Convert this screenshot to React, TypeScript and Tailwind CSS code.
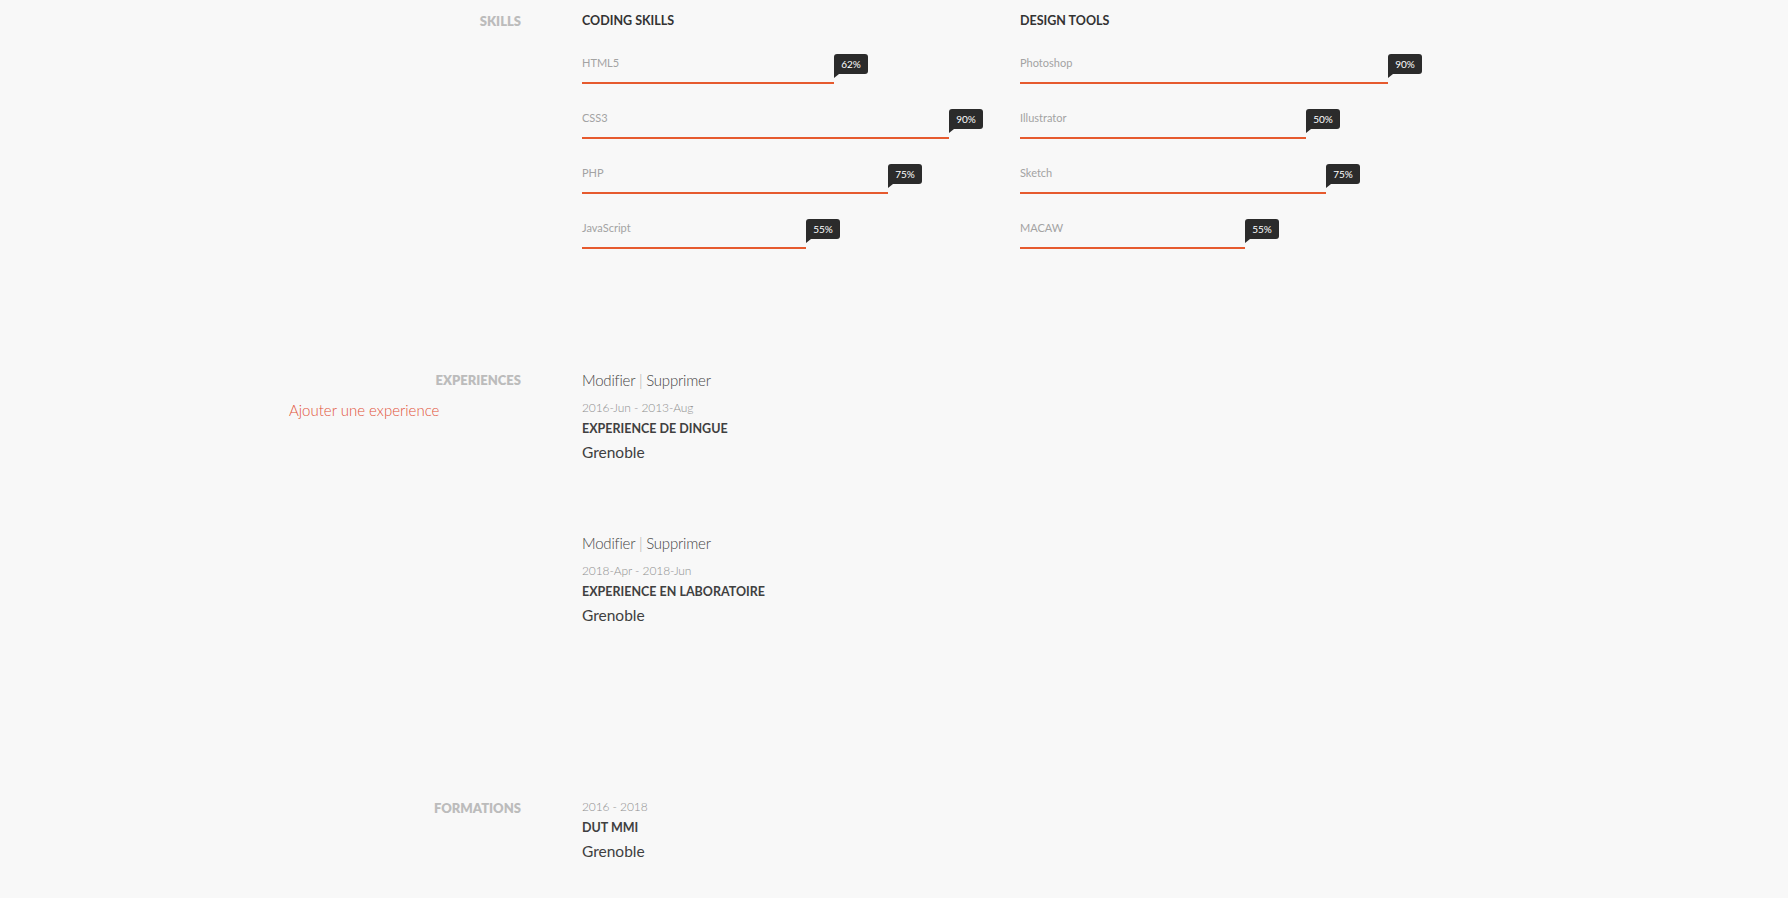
import React from "react";

type Skill = { name: string; label: string; width: number };

const coding: Skill[] = [
  { name: "HTML5", label: "62%", width: 252 },
  { name: "CSS3", label: "90%", width: 367 },
  { name: "PHP", label: "75%", width: 306 },
  { name: "JavaScript", label: "55%", width: 224 },
];

const design: Skill[] = [
  { name: "Photoshop", label: "90%", width: 368 },
  { name: "Illustrator", label: "50%", width: 286 },
  { name: "Sketch", label: "75%", width: 306 },
  { name: "MACAW", label: "55%", width: 225 },
];

const experiences = [
  { dates: "2016-Jun - 2013-Aug", title: "EXPERIENCE DE DINGUE", place: "Grenoble" },
  { dates: "2018-Apr - 2018-Jun", title: "EXPERIENCE EN LABORATOIRE", place: "Grenoble" },
];

const SkillBar = ({ skill }: { skill: Skill }) => (
  <div className="flex flex-col">
    <div className="text-[11px] leading-4 text-[#a3a3a3]">{skill.name}</div>
    <div className="relative mt-[11px] h-[2px] w-[408px]">
      <div className="h-full bg-[#e65a2e]" style={{ width: skill.width }} />
      {/* tooltip sits right on the end of the fill */}
      <div
        className="absolute bottom-[10px] h-[20px] w-[34px] rounded-[3px] rounded-bl-none bg-[#2b2b2b] text-center text-[10px] leading-[20px] text-white"
        style={{ left: skill.width }}
      >
        {skill.label}
        <span className="absolute left-0 top-full h-0 w-0 border-r-[5px] border-t-[4px] border-r-transparent border-t-[#2b2b2b]" />
      </div>
    </div>
  </div>
);

const SkillColumn = ({ title, items }: { title: string; items: Skill[] }) => (
  <div className="flex w-[408px] flex-col">
    <h3 className="text-[12.5px] font-bold leading-5 text-[#333]">{title}</h3>
    <div className="mt-6 flex flex-col gap-[26px]">
      {items.map((s) => (
        <SkillBar key={s.name} skill={s} />
      ))}
    </div>
  </div>
);

const SectionLabel = ({ children }: { children: React.ReactNode }) => (
  <h2 className="text-right text-[13px] font-extrabold leading-5 text-[#bcbcbc]">{children}</h2>
);

const Entry = ({ dates, title, place }: { dates: string; title: string; place: string }) => (
  <div className="flex flex-col">
    <div className="text-[12px] font-light leading-[18px] tracking-[-0.1px] text-[#8f8f8f]">{dates}</div>
    <div className="mt-[2px] text-[12.5px] font-bold leading-5 text-[#404040]">{title}</div>
    <div className="mt-[2px] text-[15.5px] leading-[22px] text-[#404040]">{place}</div>
  </div>
);

export default function App() {
  return (
    <div className="min-h-screen bg-[#f8f8f8] font-['Lato',sans-serif]">
      <div className="mx-auto flex w-[1210px] flex-col pt-[11px] pb-10">
        {/* Skills */}
        <section className="grid grid-cols-[232px_1fr] gap-x-[61px]">
          <SectionLabel>SKILLS</SectionLabel>
          <div className="flex gap-[30px]">
            <SkillColumn title="CODING SKILLS" items={coding} />
            <SkillColumn title="DESIGN TOOLS" items={design} />
          </div>
        </section>

        {/* Experiences */}
        <section className="mt-[121px] grid grid-cols-[232px_1fr] gap-x-[61px]">
          <div className="flex flex-col">
            <SectionLabel>EXPERIENCES</SectionLabel>
            <a className="mt-[10px] text-[15px] font-light leading-5 text-[#e2543a]">Ajouter une experience</a>
          </div>
          <div className="flex flex-col gap-[70px]">
            {experiences.map((e) => (
              <div key={e.title} className="flex flex-col">
                <div className="mb-[9px] text-[15px] font-light leading-5 tracking-[-0.2px] text-[#444]">
                  Modifier <span className="text-[#aaa]">|</span> Supprimer
                </div>
                <Entry dates={e.dates} title={e.title} place={e.place} />
              </div>
            ))}
          </div>
        </section>

        {/* Formations */}
        <section className="mt-[172px] grid grid-cols-[232px_1fr] gap-x-[61px]">
          <SectionLabel>FORMATIONS</SectionLabel>
          <Entry dates="2016 - 2018" title="DUT MMI" place="Grenoble" />
        </section>
      </div>
    </div>
  );
}
